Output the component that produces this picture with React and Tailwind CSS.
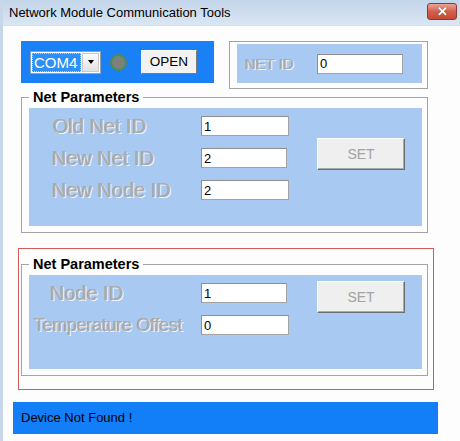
import React from 'react';

const FONT = { fontFamily: '"Liberation Sans", Arial, sans-serif' };

const LABEL = 'text-[#adadad] [text-shadow:1px_1px_0_#eef4fc,-0.5px_-0.5px_0_#9c9c9c] leading-none whitespace-nowrap';

function Field({ value, width = 'w-[88px]' }) {
  return (
    <div
      className={`${width} h-[20px] bg-white border border-[#a3a3a3] border-t-[#8f8f8f] border-l-[#8f8f8f] flex items-center pl-[2px] text-[13px] text-black leading-none`}
    >
      {value}
    </div>
  );
}

function SetButton({ className = '' }) {
  return (
    <div
      className={`w-[88px] h-[32px] bg-[#efefef] border border-white border-r-[#6f6f6f] border-b-[#6f6f6f] shadow-[inset_-1px_-1px_0_#a9a9a9] flex items-center justify-center text-[14px] text-[#a3a3a3] ${className}`}
    >
      SET
    </div>
  );
}

function Group({ children, height }) {
  return (
    <fieldset className="w-[407px] border border-[#a3a3a3] pl-[7px] pr-[5px] pb-[6px]">
      <legend className="px-[4px] text-[14.5px] font-bold leading-[16px] text-black">Net Parameters</legend>
      <div className={`mt-[3px] bg-[#a8c9f1] ${height}`}>{children}</div>
    </fieldset>
  );
}

function Row({ label, labelClass, value, width }) {
  return (
    <div className="flex items-center h-[20px]">
      <div className={`${LABEL} ${labelClass}`}>{label}</div>
      <Field value={value} width={width} />
    </div>
  );
}

export default function App() {
  return (
    <div style={FONT} className="w-[460px] h-[441px] bg-[#fdfdfd] border-l-[3px] border-[#c7d6e8] flex flex-col overflow-hidden">
      {/* title bar */}
      <div className="h-[26px] shrink-0 bg-gradient-to-b from-[#c3d5ea] to-[#dae6f3] flex items-center justify-between pl-[6px] pr-[3px] border-b border-[#d3dfee]">
        <span className="text-[13px] text-black leading-none">Network Module Communication Tools</span>
        <div className="w-[30px] h-[17px] -mt-[3px] rounded-[3px] border border-[#8a3a32] bg-gradient-to-b from-[#e9a597] via-[#d2604d] to-[#c24a36] flex items-center justify-center text-white text-[13px] font-bold leading-none [text-shadow:0_0_1px_#5a1a12]">
          ✕
        </div>
      </div>

      {/* first row */}
      <div className="flex items-start gap-[15px] ml-[18px] mt-[15px]">
        <div className="w-[193px] h-[42px] bg-[#1a80f6] flex items-center pl-[9px]">
          <div className="w-[71px] h-[23px] bg-white border border-[#8ea0b8] flex items-center p-[1px]">
            <div className="flex-1 h-full bg-[#2f8ff8] outline-1 outline-dotted outline-[#e8d27a] -outline-offset-1 flex items-center pl-[2px] text-white text-[15px] leading-none">
              COM4
            </div>
            <div className="w-[17px] h-full ml-[1px] bg-gradient-to-b from-[#fbfbfb] to-[#e2e2e2] border border-[#c8c8c8] flex items-center justify-center">
              <div className="w-0 h-0 border-l-[3.5px] border-r-[3.5px] border-t-[4px] border-l-transparent border-r-transparent border-t-black" />
            </div>
          </div>
          <div className="w-[17px] h-[17px] ml-[9px] rounded-full bg-[#7b817b] border-2 border-[#4f8a56]" />
          <div className="w-[56px] h-[24px] ml-[14px] bg-[#f2f2f2] border border-white border-r-[#7a7a7a] border-b-[#7a7a7a] flex items-center justify-center text-[13.5px] text-black">
            OPEN
          </div>
        </div>
        <div className="w-[199px] h-[48px] border border-[#a3a3a3] pl-[7px] pr-[5px] pt-[2px] pb-[5px]">
          <div className="h-full bg-[#a8c9f1] flex items-center pl-[8px]">
            <span className={`w-[72px] text-[15px] ${LABEL}`}>NET ID</span>
            <Field value="0" width="w-[86px]" />
          </div>
        </div>
      </div>

      {/* first group */}
      <div className="ml-[18px]">
        <Group height="h-[118px]">
          <div className="flex">
            <div className="flex flex-col gap-[12px] pt-[8px] pl-[23px]">
              <Row label="Old Net ID" labelClass="w-[149px] text-[20px] pl-[1px]" value="1" />
              <Row label="New Net ID" labelClass="w-[149px] text-[20px]" value="2" width="w-[86px]" />
              <Row label="New Node ID" labelClass="w-[149px] text-[20px]" value="2" />
            </div>
            <SetButton className="mt-[30px] ml-[28px]" />
          </div>
        </Group>
      </div>

      {/* second group */}
      <div className="ml-[15px] mt-[15px] w-[416px] h-[142px] border border-[#d35a5a] pl-[2px] pt-[7px]">
        <Group height="h-[94px]">
          <div className="flex">
            <div className="flex flex-col gap-[12px] pt-[8px] pl-[5px]">
              <Row label="Node ID" labelClass="w-[167px] text-[20px] pl-[16px]" value="1" width="w-[86px]" />
              <Row label="Temperature Offest" labelClass="w-[167px] text-[18px] tracking-[-0.3px]" value="0" />
            </div>
            <SetButton className="mt-[6px] ml-[28px]" />
          </div>
        </Group>
      </div>

      {/* status bar */}
      <div className="ml-[10px] mt-[12px] w-[425px] h-[32px] bg-[#127ef8] flex items-center pl-[8px] text-[13px] text-black">
        Device Not Found !
      </div>
    </div>
  );
}
